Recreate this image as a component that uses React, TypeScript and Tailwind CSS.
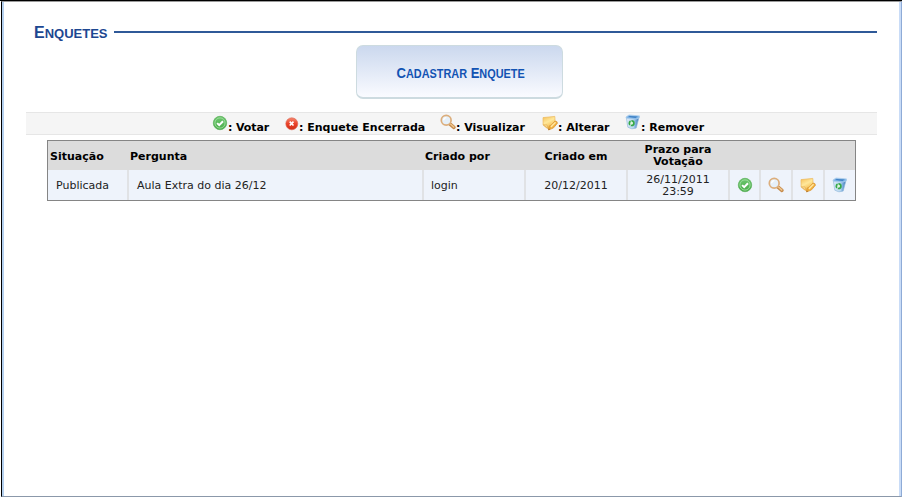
import type { ReactNode } from "react";

function CheckIcon() {
  return (
    <svg width="16" height="16" viewBox="0 0 16 16" className="block shrink-0">
      <defs>
        <linearGradient id="green" x2="0" y2="1">
          <stop stopColor="#6fc870" />
          <stop offset="1" stopColor="#48ab48" />
        </linearGradient>
      </defs>
      <circle cx="8" cy="8" r="6.7" fill="url(#green)" stroke="#5fb35f" strokeWidth="0.8" />
      <circle cx="8" cy="8" r="5.1" fill="none" stroke="#a2dea0" strokeWidth="0.9" />
      <path d="M5.1 8.1 7.2 10.1 11 6.2" fill="none" stroke="#fff" strokeWidth="2" />
    </svg>
  );
}

function ClosedIcon() {
  return (
    <svg width="14" height="14" viewBox="0 0 14 14" className="block shrink-0">
      <defs>
        <linearGradient id="red" x2="0" y2="1">
          <stop stopColor="#f58a72" />
          <stop offset="0.5" stopColor="#ea4128" />
          <stop offset="1" stopColor="#cf2f18" />
        </linearGradient>
      </defs>
      <circle cx="6.8" cy="6.8" r="6" fill="url(#red)" stroke="#dc604c" strokeWidth="0.6" />
      <path d="m4.7 4.7 3.8 3.8m0-3.8L4.7 8.5" stroke="#fff" strokeWidth="1.7" />
    </svg>
  );
}

function SearchIcon() {
  return (
    <svg width="16" height="16" viewBox="0 0 16 16" className="block shrink-0">
      <path d="m10.4 10.4 3.5 3" stroke="#c58a4b" strokeWidth="3.5" strokeLinecap="round" />
      <path d="m10.7 10.3 3 2.6" stroke="#efc68e" strokeWidth="1.5" strokeLinecap="round" />
      <circle cx="6.2" cy="6.2" r="4.9" fill="#e6f0f9" stroke="#dcae7c" strokeWidth="1.7" />
      <path d="M3.6 6.3a2.9 2.9 0 0 1 2.8-2.7" stroke="#fff" strokeWidth="1.3" fill="none" />
    </svg>
  );
}

function EditIcon() {
  return (
    <svg width="16" height="16" viewBox="0 0 16 16" className="block shrink-0">
      <defs>
        <linearGradient id="note" x2="0.5" y2="1">
          <stop stopColor="#f5be55" />
          <stop offset="0.5" stopColor="#ffe89b" />
          <stop offset="1" stopColor="#f3b541" />
        </linearGradient>
      </defs>
      <path d="M1 2.6 12.8 1.4l.6 9.2-5 .8-1.7 2.3-2.4-1L1.1 10z" fill="url(#note)" stroke="#edb95d" strokeWidth="0.7" />
      <path d="M1.3 9.8 5 9.9l1 3.4z" fill="#fadb9a" stroke="#dca545" strokeWidth="0.5" />
      <path d="m6.4 15 .9-4.1 1.8-.7 3.8-4.1q2.5-.2 2.6 2.1l-4.2 4.9z" fill="#f1ae3b" stroke="#d99637" strokeWidth="0.7" />
      <path d="m8.9 11.9 4.7-4.7" stroke="#ffe6a0" strokeWidth="1.5" />
      <path d="m6.4 15 .4-1.7 1.4 1.1z" fill="#a86b2a" />
    </svg>
  );
}

function TrashIcon() {
  return (
    <svg width="16" height="16" viewBox="0 0 16 16" className="block shrink-0">
      <defs>
        <linearGradient id="bin">
          <stop stopColor="#dbeaf8" />
          <stop offset="0.55" stopColor="#b9d7f1" />
          <stop offset="0.75" stopColor="#73a7d8" />
          <stop offset="1" stopColor="#3e76b2" />
        </linearGradient>
      </defs>
      <path d="M1.3 3.5 2.8 13.2q4 2.8 8.4.9l2.9-11z" fill="url(#bin)" stroke="#8ab3d9" strokeWidth="0.6" />
      <path d="m1 3 3-2 10.6.9-.5 2.1-3.4 1.2L1.4 4.3z" fill="#81b7e9" stroke="#adcdea" strokeWidth="0.8" />
      <path d="m3 3.1 1.7-1 8.2.5-2.4 1.3z" fill="#3f80c4" />
      <circle cx="6.6" cy="9.2" r="2.3" fill="#dff3e2" stroke="#35a847" strokeWidth="1.7" strokeDasharray="4 0.8" />
    </svg>
  );
}

function LegendItem({ icon, label, className }: { icon: ReactNode; label: string; className: string }) {
  return (
    <div className={`flex shrink-0 items-start ${className}`}>
      {icon}
      <span className="pt-[8px] leading-[13px]">{label}</span>
    </div>
  );
}

const columns = "grid grid-cols-[81px_295px_102px_102px_102px_31px_32px_32px_30px]";
const divider = "border-r-2 border-[#e0e2e5]";

export default function App() {
  return (
    <main className="h-[497px] w-[902px] overflow-hidden border-t border-black bg-white pl-px font-['DejaVu_Sans',Verdana,sans-serif] text-[11px] text-[#222]">
      <div className="h-[496px] border-b border-l border-r border-t border-b-[#8b98aa] border-l-black border-r-[#8eabd7] border-t-[#9a9a9a]">
        <div className="h-[494px] border-l-2 border-r-2 border-l-[#b5d0ee] border-r-[#c9dcf7] pl-[22px] pr-[22px]">
          <header className="flex h-[43px] items-start pl-[8px]">
            <h1 className="w-[80px] whitespace-nowrap pt-[21px] font-['Liberation_Sans',Arial,sans-serif] text-[16px] font-bold leading-[20px] text-[#1d4791]">
              E<span className="text-[13px]">NQUETES</span>
            </h1>
            <div className="mt-[29px] h-[2px] flex-1 bg-[#2f5998]" />
          </header>

          <button className="ml-[330px] flex h-[54px] w-[207px] items-center justify-center whitespace-nowrap rounded-[7px] border border-b-2 border-[#cddbe0] bg-linear-to-b from-[#cbd8ee] to-[#fafbff] pl-[2px] pt-[3px] font-['Liberation_Sans',Arial,sans-serif] text-[15px] font-bold text-[#1253b3]">
            <span className="inline-block scale-x-[0.87]">C<span className="text-[12.5px]">ADASTRAR</span> E<span className="text-[12.5px]">NQUETE</span></span>
          </button>

          <div className="mt-[13px] flex h-[23px] border-y border-[#e6e6e6] bg-[#f5f5f5] pl-[186px] font-bold text-black">
            <LegendItem icon={<div className="pt-[2px]"><CheckIcon /></div>} label=": Votar" className="w-[73px] tracking-[-0.1px]" />
            <LegendItem icon={<div className="pt-[4px]"><ClosedIcon /></div>} label=": Enquete Encerrada" className="w-[155px]" />
            <LegendItem icon={<div className="pt-[1px]"><SearchIcon /></div>} label=": Visualizar" className="w-[102px]" />
            <LegendItem icon={<div className="pt-[2px]"><EditIcon /></div>} label=": Alterar" className="w-[83px]" />
            <LegendItem icon={<div className="pt-[1px]"><TrashIcon /></div>} label=": Remover" className="w-[90px]" />
          </div>

          <section className="ml-[21px] mt-[5px] h-[61px] w-[809px] border border-[#858585]">
            <div className={`${columns} h-[29px] items-center bg-[#dcdcdc] font-bold leading-[12px] text-black`}>
              <div className="pl-[2px] pt-[3px]">Situação</div>
              <div className="pl-px pt-[3px]">Pergunta</div>
              <div className="pl-px pt-[3px]">Criado por</div>
              <div className="pr-[2px] pt-[3px] text-center">Criado em</div>
              <div className="pr-[2px] text-center">Prazo para<br />Votação</div>
            </div>
            <div className={`${columns} h-[30px] bg-[#eef3fb] leading-[12px] [&>div]:flex [&>div]:items-center`}>
              <div className={`${divider} pl-[8px] pt-[2px]`}>Publicada</div>
              <div className={`${divider} pl-[8px] pt-[2px]`}>Aula Extra do dia 26/12</div>
              <div className={`${divider} pl-[7px] pt-[2px]`}>login</div>
              <div className={`${divider} justify-center pt-[2px]`}>20/12/2011</div>
              <div className={`${divider} justify-center pt-px text-center`}>26/11/2011<br />23:59</div>
              <div className={`${divider} justify-center`}><CheckIcon /></div>
              <div className={`${divider} justify-center`}><SearchIcon /></div>
              <div className={`${divider} justify-center`}><EditIcon /></div>
              <div className="justify-center"><TrashIcon /></div>
            </div>
          </section>
        </div>
      </div>
    </main>
  );
}
